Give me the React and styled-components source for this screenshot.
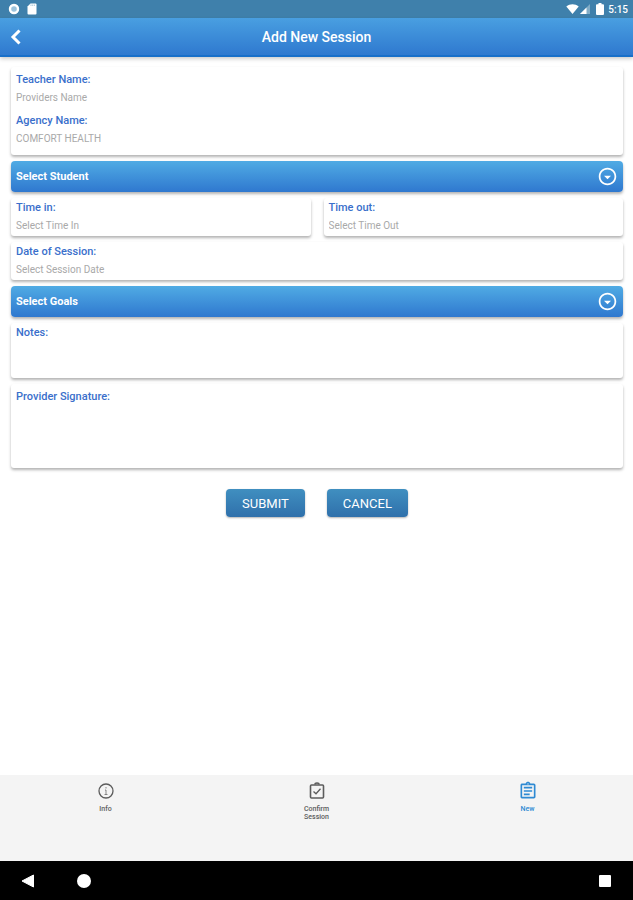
import styled, { createGlobalStyle } from "styled-components";
import { useState } from "react";
import {
    MdOutlineArrowDropDownCircle,
    MdOutlineAssignment,
} from "react-icons/md";

const tabs = [
    { id: "info", label: "Info", Icon: InfoIcon },
    { id: "confirm", label: "Confirm Session", Icon: ConfirmIcon },
    { id: "new", label: "New", Icon: MdOutlineAssignment },
];

const App = () => {
    const [active, setActive] = useState("new");

    return <Screen>
        <GlobalStyle />
        <StatusBar>
            <StatusGroup>
                <svg width="12" height="12" viewBox="0 0 12 12">
                    <circle cx="6" cy="6" r="5" fill="#9cc3dc" />
                    <circle cx="6" cy="6" r="4" fill="none" stroke="#fff" strokeWidth="2.400" />
                </svg>
                <svg width="10" height="12" viewBox="0 0 10 12">
                    <path d="M3.500 0.500H8.500a1 1 0 0 1 1 1v9a1 1 0 0 1-1 1H1.500a1 1 0 0 1-1-1V3.500z" fill="#fff" />
                    <path d="M4 1.500v1.500M5.700 1.500v1.500M7.400 1.500v1.500" stroke="#8db4cb" strokeWidth="0.700" />
                </svg>
            </StatusGroup>
            <StatusGroup $tight>
                <svg width="13" height="10" viewBox="0 0 13 10">
                    <path d="M0.300 2.500C4-0.400 9-0.400 12.700 2.500L6.500 10z" fill="#fff" />
                </svg>
                <svg width="10" height="10" viewBox="0 0 10 10">
                    <path d="M0 10L10 0V10z" fill="#82adc7" />
                    <path d="M0 10L6.500 3.500V10z" fill="#fff" />
                </svg>
                <Battery width="8" height="12" viewBox="0 0 8 12">
                    <path d="M2.500 0h3v1.200H7a1 1 0 0 1 1 1V11a1 1 0 0 1-1 1H1a1 1 0 0 1-1-1V2.200a1 1 0 0 1 1-1h1.500z" fill="#fff" />
                </Battery>
                <span>5:15</span>
            </StatusGroup>
        </StatusBar>

        <Header>
            <BackButton type="button" aria-label="Back">
                <svg width="12" height="16" viewBox="0 0 12 16">
                    <path d="M9.500 1.500L3 8l6.500 6.500" fill="none" stroke="#fff" strokeWidth="3" />
                </svg>
            </BackButton>
            <Title>Add New Session</Title>
        </Header>

        <Form onSubmit={(e) => e.preventDefault()}>
            <Card $pad="3px 5px 10px">
                <Field>
                    <Label htmlFor="teacher">Teacher Name:</Label>
                    <Input id="teacher" placeholder="Providers Name" />
                </Field>
                <Field>
                    <Label htmlFor="agency">Agency Name:</Label>
                    <Input id="agency" defaultValue="COMFORT HEALTH" />
                </Field>
            </Card>

            <Dropdown label="Select Student" />

            <Row>
                <Card>
                    <Label htmlFor="timeIn">Time in:</Label>
                    <Input id="timeIn" placeholder="Select Time In" />
                </Card>
                <Card>
                    <Label htmlFor="timeOut">Time out:</Label>
                    <Input id="timeOut" placeholder="Select Time Out" />
                </Card>
            </Row>

            <Card>
                <Label htmlFor="date">Date of Session:</Label>
                <Input id="date" placeholder="Select Session Date" />
            </Card>

            <Dropdown label="Select Goals" />

            <Card>
                <Label htmlFor="notes">Notes:</Label>
                <Notes id="notes" />
            </Card>

            <Card $pad="3px 5px 4px">
                <Label as="span" id="signature">Provider Signature:</Label>
                <SignaturePad aria-labelledby="signature" />
            </Card>

            <Actions>
                <ActionButton type="submit">SUBMIT</ActionButton>
                <ActionButton type="button">CANCEL</ActionButton>
            </Actions>
        </Form>

        <TabBar>
            {tabs.map(({ id, label, Icon }) => (
                <Tab key={id} type="button" $active={active === id} onClick={() => setActive(id)}>
                    <Icon size={20} />
                    <TabLabel>{label}</TabLabel>
                </Tab>
            ))}
        </TabBar>

        <SystemNav>
            <NavButton type="button" aria-label="System back">
                <svg width="14" height="14" viewBox="0 0 14 14">
                    <path d="M12.500 1v12L1 7z" fill="#fff" stroke="#fff" strokeLinejoin="round" />
                </svg>
            </NavButton>
            <NavButton type="button" aria-label="Home">
                <svg width="14" height="14" viewBox="0 0 14 14">
                    <circle cx="7" cy="7" r="7" fill="#fff" />
                </svg>
            </NavButton>
            <NavButton type="button" aria-label="Recent apps">
                <svg width="14" height="14" viewBox="0 0 14 14">
                    <rect x="1" y="1" width="12" height="12" rx="1" fill="#fff" />
                </svg>
            </NavButton>
        </SystemNav>
    </Screen>
}

const Dropdown = ({ label }) => (
    <DropdownBar>
        <Select aria-label={label}>
            <option>{label}</option>
        </Select>
        <MdOutlineArrowDropDownCircle size={21} />
    </DropdownBar>
)

function InfoIcon({ size }) {
    return <svg width={size} height={size} viewBox="0 0 20 20" fill="none">
        <circle cx="10" cy="10" r="7" stroke="currentColor" strokeWidth="1.300" />
        <path d="M10 6v1.500M9 9h1v4.500M8.500 13.500h3" stroke="currentColor" strokeWidth="1" opacity="0.7" />
    </svg>
}

function ConfirmIcon({ size }) {
    return <svg width={size} height={size} viewBox="0 0 20 20" fill="none" stroke="currentColor">
        <rect x="3.500" y="4" width="13" height="13" rx="1" strokeWidth="1.600" />
        <path d="M8 3.500a2 1.500 0 0 1 4 0" strokeWidth="1.600" />
        <path d="M6.500 10.500l2.500 2.300 4.500-5" strokeWidth="1.300" />
    </svg>
}

const GlobalStyle = createGlobalStyle`
    *{
        box-sizing: border-box;
    }

    body{
        margin: 0;
        background: #fff;
        font-family: Roboto, "Liberation Sans", sans-serif;
    }

    button, input, select, textarea{
        font-family: inherit;
    }
`;

const Screen = styled.div`
    display: flex;
    flex-direction: column;
    min-height: 100vh;
`;

const StatusBar = styled.div`
    display: flex;
    align-items: center;
    justify-content: space-between;
    height: 18px;
    padding: 0 5px 0 8px;
    background: #3f80ab;
    color: #fff;
    font-size: 10px;
    font-weight: 500;
`;

const StatusGroup = styled.div`
    display: flex;
    align-items: center;
    gap: ${(props) => (props.$tight ? "1px" : "7px")};

    span{
        margin-left: 3px;
    }
`;

const Battery = styled.svg`
    margin-left: 5px;
`;

const Header = styled.header`
    display: grid;
    grid-template-columns: 32px 1fr 32px;
    align-items: center;
    height: 39px;
    background: linear-gradient(#499fe1, #2f79cf);
    border-bottom: 2px solid #186fc9;
    box-shadow: 0 2px 4px rgba(0, 0, 0, 0.2);
`;

const BackButton = styled.button`
    display: flex;
    align-items: center;
    justify-content: center;
    height: 32px;
    padding: 0;
    background: none;
    border: none;
    cursor: pointer;
`;

const Title = styled.h1`
    margin: 0;
    color: #fff;
    font-size: 14px;
    font-weight: 500;
    text-align: center;
`;

const Form = styled.form`
    display: flex;
    flex-direction: column;
    flex: 1;
    gap: 6px;
    padding: 10px 10px 20px 11px;
`;

const Card = styled.div`
    display: flex;
    flex-direction: column;
    padding: ${(props) => props.$pad || "0 5px 4px"};
    background: #fff;
    border-radius: 3px;
    box-shadow: 0 2px 3px rgba(0, 0, 0, 0.3);
`;

const Field = styled.div`
    display: flex;
    flex-direction: column;

    & + &{
        margin-top: 7px;
    }
`;

const Row = styled.div`
    display: grid;
    grid-template-columns: 1fr 1fr;
    gap: 13px;
`;

const Label = styled.label`
    color: #3a6fcb;
    font-size: 11px;
    font-weight: 500;
    line-height: 20px;
`;

const Input = styled.input`
    width: 100%;
    height: 14px;
    padding: 0;
    background: none;
    border: none;
    outline: none;
    color: #a9a9a9;
    font-size: 10px;

    &::placeholder{
        color: #a9a9a9;
    }
`;

const Notes = styled.textarea`
    height: 31px;
    padding: 0;
    background: none;
    border: none;
    outline: none;
    resize: none;
    color: #a9a9a9;
    font-size: 10px;
`;

const SignaturePad = styled.canvas`
    width: 100%;
    height: 57px;
`;

const DropdownBar = styled.div`
    display: grid;
    grid-template-columns: 1fr 31px;
    align-items: center;
    height: 31px;
    background: linear-gradient(#50abe4, #2f78cf);
    border-radius: 4px;
    box-shadow: 0 2px 3px rgba(0, 0, 0, 0.3);
    color: #fff;

    svg{
        grid-area: 1 / 2;
        justify-self: center;
        pointer-events: none;
    }
`;

const Select = styled.select`
    grid-area: 1 / 1 / 2 / 3;
    height: 31px;
    padding: 0 5px;
    appearance: none;
    background: none;
    border: none;
    color: #fff;
    font-size: 11px;
    font-weight: 700;
    cursor: pointer;

    option{
        color: #333;
    }
`;

const Actions = styled.div`
    display: flex;
    justify-content: center;
    gap: 22px;
    margin-top: 15px;
`;

const ActionButton = styled.button`
    height: 28px;
    padding: 0 16px;
    background: linear-gradient(#408fc0, #2f70ab);
    border: none;
    border-radius: 4px;
    box-shadow: 0 1px 2px rgba(0, 0, 0, 0.3);
    color: #fff;
    font-size: 13px;
    cursor: pointer;
`;

const TabBar = styled.nav`
    display: grid;
    grid-template-columns: repeat(3, 1fr);
    height: 86px;
    background: #f4f4f4;
`;

const Tab = styled.button`
    display: flex;
    flex-direction: column;
    align-items: center;
    gap: 4px;
    padding: 6px 0 0;
    background: none;
    border: none;
    color: ${(props) => (props.$active ? "#2e8ad3" : "#5c5c5c")};
    cursor: pointer;
`;

const TabLabel = styled.span`
    width: 40px;
    font-size: 7px;
    font-weight: 500;
    line-height: 8px;
`;

const SystemNav = styled.div`
    display: flex;
    align-items: center;
    gap: 42px;
    height: 39px;
    padding: 0 21px;
    background: #000;
`;

const NavButton = styled.button`
    display: flex;
    padding: 0;
    background: none;
    border: none;
    cursor: pointer;

    &:last-child{
        margin-left: auto;
    }
`;

export default App;
